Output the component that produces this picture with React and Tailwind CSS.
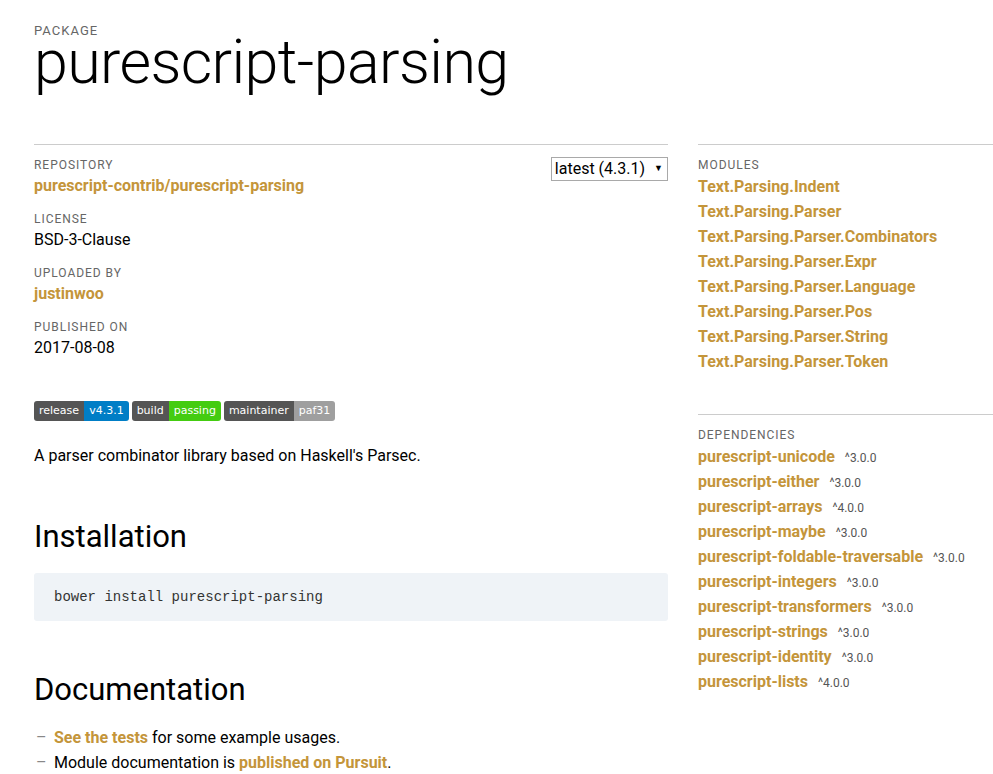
const modules = [
  "Text.Parsing.Indent",
  "Text.Parsing.Parser",
  "Text.Parsing.Parser.Combinators",
  "Text.Parsing.Parser.Expr",
  "Text.Parsing.Parser.Language",
  "Text.Parsing.Parser.Pos",
  "Text.Parsing.Parser.String",
  "Text.Parsing.Parser.Token",
];

const deps = [
  ["purescript-unicode", "^3.0.0"],
  ["purescript-either", "^3.0.0"],
  ["purescript-arrays", "^4.0.0"],
  ["purescript-maybe", "^3.0.0"],
  ["purescript-foldable-traversable", "^3.0.0"],
  ["purescript-integers", "^3.0.0"],
  ["purescript-transformers", "^3.0.0"],
  ["purescript-strings", "^3.0.0"],
  ["purescript-identity", "^3.0.0"],
  ["purescript-lists", "^4.0.0"],
];

const Label = ({ children }) => (
  <div className="text-[12px] leading-[16px] uppercase tracking-[0.08em] text-[#666]">{children}</div>
);

const Badge = ({ left, right, color }) => (
  <span className="flex h-5 rounded-[3px] overflow-hidden text-[11px] text-white font-['DejaVu_Sans',sans-serif]">
    <span className="bg-[#555] px-[5px] leading-5">{left}</span>
    <span className={`${color} px-[5px] leading-5`}>{right}</span>
  </span>
);

const App = () => {
  return (
    <main className="w-[993px] h-[774px] overflow-hidden bg-white text-black font-['Roboto',sans-serif]">
      <div className="pl-[34px] w-[1100px]">
        <div className="pt-[23px]">
          <div className="text-[13px] leading-[16px] uppercase tracking-[0.08em] text-[#666]">Package</div>
          <h1 className="text-[61px] font-light leading-[46px] tracking-[-0.01em]">purescript-parsing</h1>
        </div>

        <div className="flex gap-[30px] mt-[59px]">
          <section className="w-[634px] shrink-0">
            <div className="border-t border-[#ccc] pt-[12px] flex justify-between">
              <div className="flex flex-col">
                <Label>Repository</Label>
                <a className="mt-[3px] text-[16px] leading-[20px] font-bold text-[#c4953a]">purescript-contrib/purescript-parsing</a>
                <div className="mt-[15px]"><Label>License</Label></div>
                <div className="mt-[3px] text-[16px] leading-[20px]">BSD-3-Clause</div>
                <div className="mt-[15px]"><Label>Uploaded by</Label></div>
                <a className="mt-[3px] text-[16px] leading-[20px] font-bold text-[#c4953a]">justinwoo</a>
                <div className="mt-[15px]"><Label>Published on</Label></div>
                <div className="mt-[3px] text-[16px] leading-[20px]">2017-08-08</div>
              </div>
              <div>
                <div className="flex items-center gap-[9px] h-[24px] border border-[#a9a9a9] pl-[3px] pr-[4px] text-[16px]">
                  <span>latest (4.3.1)</span>
                  <span className="text-[9px]">▼</span>
                </div>
              </div>
            </div>

            <div className="flex gap-[3px] mt-[43px]">
              <Badge left="release" right="v4.3.1" color="bg-[#007ec6]" />
              <Badge left="build" right="passing" color="bg-[#44cc11]" />
              <Badge left="maintainer" right="paf31" color="bg-[#9f9f9f]" />
            </div>

            <p className="mt-[24px] text-[16px] leading-[22px]">A parser combinator library based on Haskell's Parsec.</p>

            <h2 className="mt-[50px] text-[31px] leading-[40px] font-normal">Installation</h2>

            <pre className="mt-[16px] bg-[#eff3f7] rounded-[3px] px-[20px] py-[14px] text-[14px] leading-[20px] text-[#333] font-['Liberation_Mono',monospace]">bower install purescript-parsing</pre>

            <h2 className="mt-[49px] text-[31px] leading-[40px] font-normal">Documentation</h2>

            <ul className="mt-[15px] text-[16px] leading-[25px]">
              <li className="flex">
                <span className="w-[20px] text-[#888] pl-[2px]">–</span>
                <span><a className="font-bold text-[#c4953a]">See the tests</a> for some example usages.</span>
              </li>
              <li className="flex">
                <span className="w-[20px] text-[#888] pl-[2px]">–</span>
                <span>Module documentation is <a className="font-bold text-[#c4953a]">published on Pursuit</a>.</span>
              </li>
            </ul>
          </section>

          <aside className="w-[360px] shrink-0">
            <div className="border-t border-[#ccc] pt-[12px]">
              <Label>Modules</Label>
              <ul className="mt-[1px]">
                {modules.map((m) => (
                  <li key={m} className="text-[16px] leading-[25px] font-bold text-[#c4953a]">{m}</li>
                ))}
              </ul>
            </div>

            <div className="border-t border-[#ccc] pt-[12px] mt-[40px]">
              <Label>Dependencies</Label>
              <ul className="mt-[1px]">
                {deps.map(([name, ver]) => (
                  <li key={name} className="h-[25px] text-[16px] leading-[25px] whitespace-nowrap">
                    <a className="font-bold text-[#c4953a]">{name}</a>
                    <span className="ml-[10px] text-[12px] leading-none text-[#555]">{ver}</span>
                  </li>
                ))}
              </ul>
            </div>
          </aside>
        </div>
      </div>
    </main>
  );
};

export default App;
